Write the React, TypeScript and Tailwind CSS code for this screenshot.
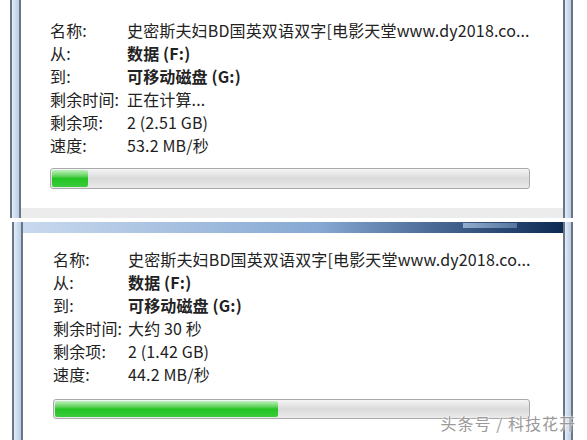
type Row = { label: string; value: string; bold?: boolean };

const NAME = "史密斯夫妇BD国英双语双字[电影天堂www.dy2018.co...";

const first: Row[] = [
  { label: "名称:", value: NAME },
  { label: "从:", value: "数据 (F:)", bold: true },
  { label: "到:", value: "可移动磁盘 (G:)", bold: true },
  { label: "剩余时间:", value: "正在计算..." },
  { label: "剩余项:", value: "2 (2.51 GB)" },
  { label: "速度:", value: "53.2 MB/秒" },
];

const second: Row[] = [
  { label: "名称:", value: NAME },
  { label: "从:", value: "数据 (F:)", bold: true },
  { label: "到:", value: "可移动磁盘 (G:)", bold: true },
  { label: "剩余时间:", value: "大约 30 秒" },
  { label: "剩余项:", value: "2 (1.42 GB)" },
  { label: "速度:", value: "44.2 MB/秒" },
];

// Win7 窗口边框
function Frame({ w }: { w: string }) {
  return (
    <div
      className={`${w} shrink-0 border-x-2 border-x-[#6b7584] bg-gradient-to-r from-[#e4ecf7] via-[#cddcef] to-[#b9cde6]`}
    />
  );
}

function Rows({ rows, labelW }: { rows: Row[]; labelW: string }) {
  return (
    <div className="flex flex-col">
      {rows.map((r, i) => (
        <div key={i} className="flex h-[23px] items-center whitespace-nowrap">
          <span className={`${labelW} shrink-0`}>{r.label}</span>
          <span className={r.bold ? "font-bold" : ""}>{r.value}</span>
        </div>
      ))}
    </div>
  );
}

function Bar({ pct, w, h }: { pct: number; w: string; h: string }) {
  return (
    <div
      className={`${w} ${h} rounded-[3px] border border-[#a9a9a9] bg-gradient-to-b from-[#f5f5f5] via-[#dadada] to-[#ebebeb] p-px`}
    >
      <div
        className="h-full rounded-[2px] bg-gradient-to-b from-[#bdf2bd] via-[#22c422] to-[#3acb3a]"
        style={{ width: `${pct}%` }}
      />
    </div>
  );
}

export default function App() {
  return (
    <div
      className="relative h-[440px] w-[587px] overflow-hidden bg-white text-[16px] tracking-[0.15px] text-[#222]"
      style={{ fontFamily: '"Noto Sans CJK SC", "Noto Sans", sans-serif' }}
    >
      {/* 第一个窗口 */}
      <div className="ml-[10px] flex h-[218px] w-[563px]">
        <Frame w="w-[11px]" />
        <div className="flex flex-1 flex-col bg-white">
          <div className="flex-1 pl-[29px] pt-[18px]">
            <Rows rows={first} labelW="w-[77px]" />
            <div className="mt-[12px]">
              <Bar pct={7.6} w="w-[480px]" h="h-[21px]" />
            </div>
          </div>
          <div className="h-[10px] bg-[#ececec]" />
        </div>
        <Frame w="w-[10px]" />
      </div>

      <div className="h-[4px]" />

      {/* 第二个窗口 */}
      <div className="ml-[12px] flex h-[218px] w-[561px]">
        <Frame w="w-[11px]" />
        <div className="flex flex-1 flex-col bg-white">
          <div className="flex h-[11px] bg-gradient-to-r from-[#c9d9ee] via-[#86a8d2] via-55% to-[#0d2a55]">
            <div className="w-[440px] shrink-0" />
            <div className="mt-px h-[5px] w-[54px] bg-gradient-to-r from-[#a9c1de] to-[#5f82ad] opacity-80" />
          </div>
          <div className="pl-[30px] pt-[14px]">
            <Rows rows={second} labelW="w-[75px]" />
            <div className="mt-[14px]">
              <Bar pct={47.2} w="w-[477px]" h="h-[20px]" />
            </div>
          </div>
        </div>
        <Frame w="w-[10px]" />
      </div>

      {/* 水印 */}
      <div className="absolute bottom-[5px] right-[11px] text-[16px] tracking-[1px] text-[#9a9a9a] [text-shadow:0_0_2px_#fff,0_0_2px_#fff]">
        头条号 / 科技花开
      </div>
    </div>
  );
}
